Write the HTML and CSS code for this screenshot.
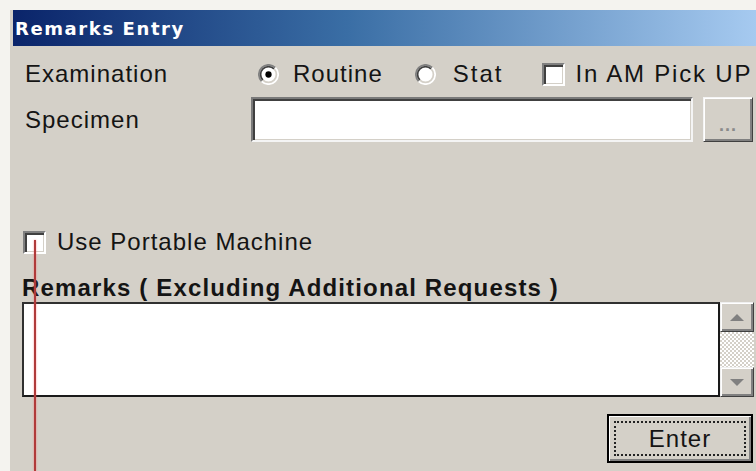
FILE: index.html
```html
<!DOCTYPE html>
<html lang="en">
<head>
<meta charset="utf-8">
<title>Remarks Entry</title>
<link rel="stylesheet" href="styles.css">
</head>
<body>
<div class="window">
  <div class="titlebar"><span>Remarks Entry</span></div>
  <div class="content">
    <div class="row row-exam">
      <span class="label">Examination</span>
      <div class="options">
        <span class="opt">
          <svg class="radio" viewBox="0 0 12 12" width="21" height="21" aria-hidden="true">
            <circle cx="6" cy="6" r="5.5" fill="#fff"/>
            <path d="M9.9 2.1 A5.5 5.5 0 0 0 2.1 9.9" fill="none" stroke="#808080" stroke-width="1"/>
            <path d="M9.2 2.8 A4.5 4.5 0 0 0 2.8 9.2" fill="none" stroke="#404040" stroke-width="1"/>
            <path d="M2.1 9.9 A5.5 5.5 0 0 0 9.9 2.1" fill="none" stroke="#fff" stroke-width="1"/>
            <path d="M2.8 9.2 A4.5 4.5 0 0 0 9.2 2.8" fill="none" stroke="#d4d0c8" stroke-width="1"/>
            <circle cx="6" cy="6" r="1.8" fill="#000"/>
          </svg>
          <span>Routine</span>
        </span>
        <span class="opt opt-stat">
          <svg class="radio" viewBox="0 0 12 12" width="21" height="21" aria-hidden="true">
            <circle cx="6" cy="6" r="5.5" fill="#fff"/>
            <path d="M9.9 2.1 A5.5 5.5 0 0 0 2.1 9.9" fill="none" stroke="#808080" stroke-width="1"/>
            <path d="M9.2 2.8 A4.5 4.5 0 0 0 2.8 9.2" fill="none" stroke="#404040" stroke-width="1"/>
            <path d="M2.1 9.9 A5.5 5.5 0 0 0 9.9 2.1" fill="none" stroke="#fff" stroke-width="1"/>
            <path d="M2.8 9.2 A4.5 4.5 0 0 0 9.2 2.8" fill="none" stroke="#d4d0c8" stroke-width="1"/>
          </svg>
          <span class="stat-text">Stat</span>
        </span>
        <span class="opt opt-pickup">
          <span class="check"></span>
          <span class="pickup-text">In AM Pick UP</span>
        </span>
      </div>
    </div>

    <div class="row row-spec">
      <span class="label">Specimen</span>
      <div class="field"></div>
      <div class="btn btn-browse"><span>...</span></div>
    </div>

    <div class="row row-portable">
      <span class="check"></span>
      <span>Use Portable Machine</span>
    </div>

    <div class="heading">Remarks ( Excluding Additional Requests )</div>

    <div class="memo">
      <div class="memo-text"></div>
      <div class="scroll">
        <div class="scroll-btn"><span class="arrow arrow-up"></span></div>
        <div class="scroll-track"></div>
        <div class="scroll-btn"><span class="arrow arrow-down"></span></div>
      </div>
    </div>

    <div class="actions">
      <div class="btn btn-enter"><span class="focus">Enter</span></div>
    </div>
  </div>
</div>
<div class="marker"></div>
</body>
</html>
```

FILE: styles.css
```css
html, body {
  margin: 0;
  height: 100%;
}

body {
  position: relative;
  overflow: hidden;
  background: #f4f3ef;
  font-family: "Liberation Sans", Arial, sans-serif;
  font-size: 24px;
  letter-spacing: 1px;
  color: #141414;
}

.window {
  margin: 10px 0 0 10px;
  height: 461px;
  background: #d4d0c8;
}

.titlebar {
  margin-left: 3px;
  height: 36px;
  padding-left: 2px;
  display: flex;
  align-items: center;
  background: linear-gradient(90deg, #0a246a 0%, #3a6ea5 45%, #a6caf0 100%);
  color: #fff;
  font-family: "DejaVu Sans", Tahoma, sans-serif;
  font-weight: bold;
  font-size: 18px;
  letter-spacing: 1.6px;
}

.content {
  padding: 14px 0 0 12px;
}

.row {
  display: flex;
  align-items: center;
  line-height: 28px;
}

.label {
  width: 229px;
  padding-left: 3px;
  box-sizing: border-box;
  flex: none;
}

.row-exam {
  height: 28px;
}

.options {
  display: flex;
  align-items: center;
  padding-left: 7px;
}

.opt {
  display: flex;
  align-items: center;
}

.radio {
  flex: none;
  margin-right: 14px;
}

.opt-stat {
  margin-left: 32px;
}

.stat-text {
  margin-left: 3px;
  letter-spacing: 2px;
}

.opt-pickup {
  margin-left: 39px;
}

.pickup-text {
  letter-spacing: 1.8px;
}

.check {
  flex: none;
  width: 19px;
  height: 19px;
  background: #fff;
  border: 2px solid;
  border-color: #808080 #fff #fff #808080;
  box-shadow: inset 2px 2px 0 #404040, inset -1px -1px 0 #d4d0c8;
  margin-right: 10px;
}

.row-spec {
  margin-top: 9px;
  height: 45px;
}

.field {
  width: 442px;
  height: 45px;
  box-sizing: border-box;
  background: #fff;
  border: 2px solid;
  border-color: #7a7a7a #f4f4f4 #f4f4f4 #7a7a7a;
  box-shadow: inset 2px 2px 0 #404040, inset -1px -1px 0 #d4d0c8;
}

.btn {
  box-sizing: border-box;
  background: #d4d0c8;
  border: 1px solid;
  border-color: #f4f4f4 #404040 #404040 #f4f4f4;
  box-shadow: inset 1px 1px 0 #fff, inset -2px -2px 0 #808080;
  display: flex;
  align-items: center;
  justify-content: center;
}

.btn-browse {
  width: 50px;
  height: 45px;
  margin-left: 10px;
  color: #8a8a8a;
  font-weight: bold;
  font-size: 18px;
  letter-spacing: 1px;
  padding-top: 10px;
}

.row-portable {
  margin-top: 86px;
  height: 28px;
}

.row-portable .check {
  margin-left: 1px;
  margin-right: 11px;
}

.heading {
  margin-top: 19px;
  font-weight: bold;
  line-height: 26px;
  letter-spacing: 1.15px;
}

.memo {
  margin-top: 1px;
  display: flex;
  width: 732px;
  height: 95px;
}

.memo-text {
  flex: 1;
  background: #fff;
  border: 2px solid;
  border-color: #303030 #1a1a1a #1a1a1a #303030;
}

.scroll {
  width: 34px;
  display: flex;
  flex-direction: column;
}

.scroll-btn {
  height: 30px;
  box-sizing: border-box;
  background: #d4d0c8;
  border: 1px solid;
  border-color: #f0f0f0 #404040 #404040 #f0f0f0;
  box-shadow: inset 1px 1px 0 #fff, inset -2px -2px 0 #808080;
  display: flex;
  align-items: center;
  justify-content: center;
}

.scroll-track {
  flex: 1;
  background-color: #d4d0c8;
  background-image: repeating-conic-gradient(#fff 0 25%, #d4d0c8 0 50%);
  background-size: 4px 4px;
}

.arrow {
  width: 0;
  height: 0;
  border-left: 7px solid transparent;
  border-right: 7px solid transparent;
}

.arrow-up {
  border-bottom: 7px solid #808080;
}

.arrow-down {
  border-top: 7px solid #808080;
}

.actions {
  display: flex;
  justify-content: flex-end;
  margin-top: 17px;
  padding-right: 3px;
}

.btn-enter {
  width: 146px;
  height: 49px;
  border: 2px solid #000;
  box-shadow: inset 1px 1px 0 #fff, inset -2px -2px 0 #808080;
  padding: 5px;
}

.focus {
  flex: 1;
  align-self: stretch;
  display: flex;
  align-items: center;
  justify-content: center;
  border: 2px dotted #222;
  letter-spacing: 1px;
}

.marker {
  position: absolute;
  left: 34px;
  top: 240px;
  bottom: 0;
  width: 2px;
  background: #b03a3a;
  box-shadow: 0 0 2px rgba(255, 90, 90, 0.7);
}
```
